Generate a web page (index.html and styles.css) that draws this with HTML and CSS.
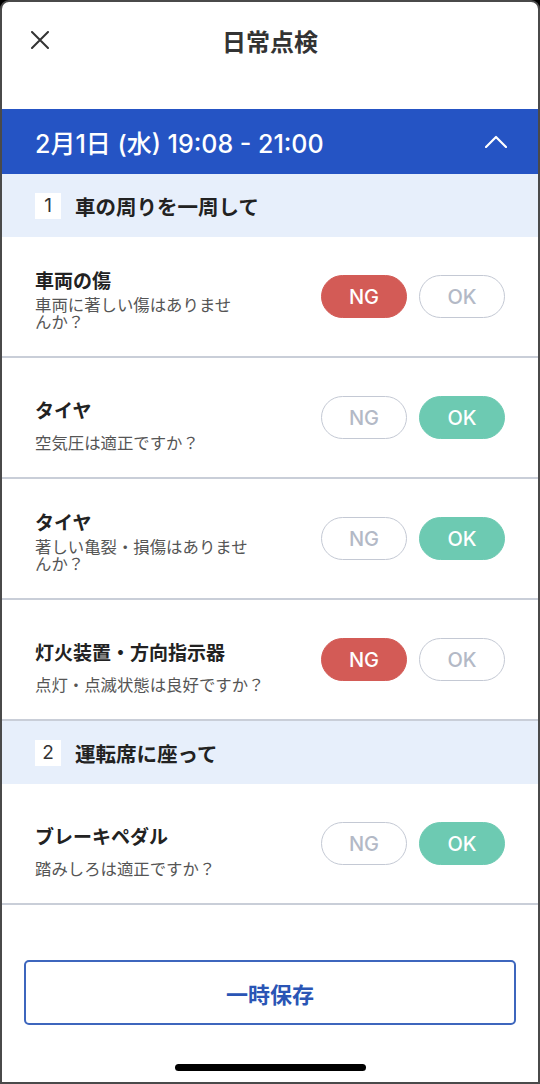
FILE: index.html
```html
<!DOCTYPE html>
<html lang="ja">
<head>
  <meta charset="UTF-8" />
  <meta name="viewport" content="width=device-width, initial-scale=1.0"/>
  <title>日常点検</title>
  <link rel="stylesheet" href="styles.css">
</head>
<body>
  <div class="phone">
    <header class="topbar">
      <button class="close" type="button" aria-label="閉じる">
        <svg width="18" height="18" viewBox="0 0 18 18">
          <path d="M1 1 L17 17 M17 1 L1 17" stroke="#333" stroke-width="2" stroke-linecap="round" fill="none"/>
        </svg>
      </button>
      <h1 class="title">日常点検</h1>
      <span></span>
    </header>

    <div class="date-bar">
      <span class="date">2月1日 (水) 19:08 - 21:00</span>
      <svg width="22" height="13" viewBox="0 0 22 13">
        <polyline points="1,12 11,2 21,12" stroke="#fff" stroke-width="2.2" fill="none" stroke-linecap="round" stroke-linejoin="round"/>
      </svg>
    </div>

    <!-- 1. 車の周り -->
    <div class="section-head">
      <span class="num">1</span>
      <span class="section-title">車の周りを一周して</span>
    </div>

    <div class="item">
      <div class="item-text">
        <div class="item-title">車両の傷</div>
        <div class="item-sub tight">車両に著しい傷はありませ<br>んか？</div>
      </div>
      <div class="choice">
        <span class="btn ng on">NG</span>
        <span class="btn">OK</span>
      </div>
    </div>

    <div class="item">
      <div class="item-text">
        <div class="item-title">タイヤ</div>
        <div class="item-sub">空気圧は適正ですか？</div>
      </div>
      <div class="choice">
        <span class="btn">NG</span>
        <span class="btn ok on">OK</span>
      </div>
    </div>

    <div class="item">
      <div class="item-text">
        <div class="item-title">タイヤ</div>
        <div class="item-sub tight">著しい亀裂・損傷はありませ<br>んか？</div>
      </div>
      <div class="choice">
        <span class="btn">NG</span>
        <span class="btn ok on">OK</span>
      </div>
    </div>

    <div class="item">
      <div class="item-text">
        <div class="item-title">灯火装置・方向指示器</div>
        <div class="item-sub">点灯・点滅状態は良好ですか？</div>
      </div>
      <div class="choice">
        <span class="btn ng on">NG</span>
        <span class="btn">OK</span>
      </div>
    </div>

    <!-- 2. 運転席 -->
    <div class="section-head">
      <span class="num">2</span>
      <span class="section-title">運転席に座って</span>
    </div>

    <div class="item">
      <div class="item-text">
        <div class="item-title">ブレーキペダル</div>
        <div class="item-sub">踏みしろは適正ですか？</div>
      </div>
      <div class="choice">
        <span class="btn">NG</span>
        <span class="btn ok on">OK</span>
      </div>
    </div>

    <footer class="footer">
      <button class="save" type="button">一時保存</button>
      <div class="home-bar"></div>
    </footer>
  </div>
</body>
</html>
```

FILE: styles.css
```css
html {
  background: #000;
}
body {
  margin: 0;
  font-family: "Noto Sans CJK JP", sans-serif;
  color: #222;
}
.phone {
  width: 540px;
  height: 1084px;
  box-sizing: border-box;
  border: 2px solid #4a4a4a;
  border-radius: 9px 9px 0 0;
  background: #fff;
  display: flex;
  flex-direction: column;
}
.topbar {
  height: 76px;
  margin-bottom: 31px;
  padding: 0 29px;
  display: grid;
  grid-template-columns: 1fr auto 1fr;
  align-items: center;
}
.close {
  border: 0;
  background: none;
  padding: 0;
  width: 18px;
  height: 18px;
  display: flex;
}
.title {
  margin: 0;
  font-size: 24px;
  font-weight: 700;
  color: #333;
}
.date-bar {
  height: 65px;
  background: #2554c4;
  color: #fff;
  padding: 0 31px 0 33px;
  display: flex;
  align-items: center;
  justify-content: space-between;
}
.date {
  font-family: Inter, "Noto Sans CJK JP", sans-serif;
  font-size: 25px;
  font-weight: 500;
}
.section-head {
  height: 63px;
  background: #e7effb;
  padding-left: 33px;
  display: flex;
  align-items: center;
  gap: 14px;
}
.num {
  width: 26px;
  height: 26px;
  background: #fff;
  display: flex;
  align-items: center;
  justify-content: center;
  font-family: Inter, sans-serif;
  font-size: 19px;
  color: #333;
}
.section-title {
  font-size: 20.5px;
  font-weight: 700;
  color: #222;
}
.item {
  height: 119px;
  border-bottom: 2px solid #c9ced8;
  padding: 0 33px;
  display: flex;
  align-items: center;
  justify-content: space-between;
}
.item-text {
  align-self: flex-end;
  margin-bottom: 26px;
}
.item-title {
  font-size: 19px;
  font-weight: 700;
  line-height: 24px;
  color: #222;
}
.item-sub {
  font-size: 16.4px;
  line-height: 17px;
  margin-top: 12px;
  color: #555;
}
.item-sub.tight {
  margin-top: 4px;
}
.choice {
  display: flex;
  gap: 12px;
}
.btn {
  width: 86px;
  height: 43px;
  box-sizing: border-box;
  border: 1.5px solid #c4c9d4;
  border-radius: 22px;
  display: flex;
  align-items: center;
  justify-content: center;
  font-family: Inter, sans-serif;
  font-size: 20px;
  font-weight: 500;
  color: #b3b9c6;
}
.btn.on {
  color: #fff;
}
.btn.ng.on {
  background: #d35b56;
  border-color: #d35b56;
}
.btn.ok.on {
  background: #6dcab2;
  border-color: #6dcab2;
}
.footer {
  margin-top: auto;
  padding: 0 22px 11px;
  display: flex;
  flex-direction: column;
  align-items: center;
}
.save {
  width: 100%;
  height: 65px;
  border: 2px solid #3d66bd;
  border-radius: 5px;
  background: #fff;
  font-family: "Noto Sans CJK JP", sans-serif;
  font-size: 22px;
  font-weight: 700;
  color: #2a55b5;
  margin-bottom: 39px;
}
.home-bar {
  width: 191px;
  height: 7px;
  border-radius: 4px;
  background: #000;
}
```
